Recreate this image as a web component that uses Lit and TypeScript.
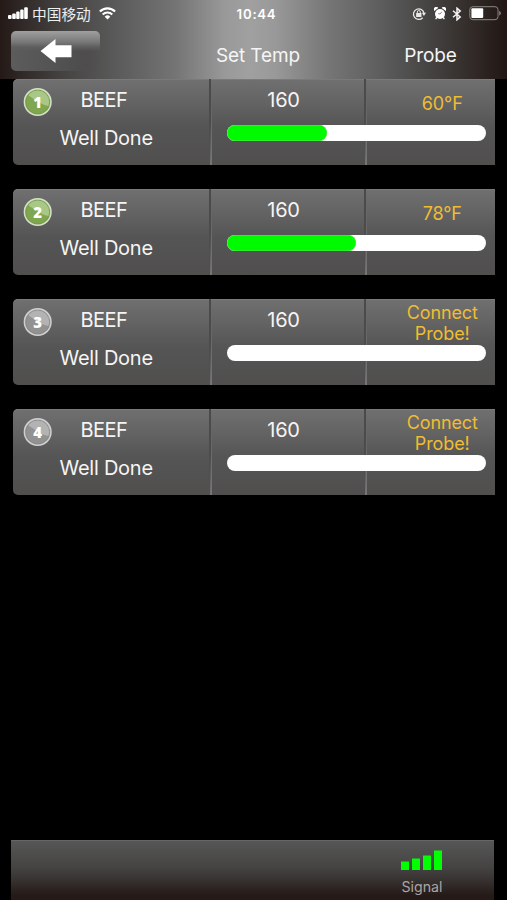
import { LitElement, html, css, svg } from "lit";
import { customElement, property } from "lit/decorators.js";
import { styleMap } from "lit/directives/style-map.js";

interface Probe {
  id: number;
  active: boolean;
  reading: string[];
  fill: number;
}

const PROBES: Probe[] = [
  { id: 1, active: true, reading: ["60°F"], fill: 100 },
  { id: 2, active: true, reading: ["78°F"], fill: 128.5 },
  { id: 3, active: false, reading: ["Connect", "Probe!"], fill: 0 },
  { id: 4, active: false, reading: ["Connect", "Probe!"], fill: 0 },
];

@customElement("status-bar")
export class StatusBar extends LitElement {
  static styles = css`
    :host {
      display: flex;
      height: 27px;
      align-items: center;
      color: #fff;
    }
    .left, .right {
      display: flex;
      align-items: center;
      flex: 1;
    }
    .left { padding-left: 8px; }
    .carrier {
      font: 14.7px/20px "Noto Sans CJK SC", sans-serif;
      margin: 0 8px 0 4px;
      color: #eee;
      transform: translateY(-0.5px);
    }
    .time {
      font: 600 13.2px/20px Inter, sans-serif;
      letter-spacing: 0.75px;
      margin-left: 4px;
    }
    .right { justify-content: flex-end; padding-right: 6px; }
    svg { display: block; flex: none; }
    .lock { margin-right: 8px; }
    .alarm { margin-right: 6px; }
    .bt { margin-right: 7px; }
  `;

  render() {
    return html`
      <div class="left">
        <svg width="20" height="13" viewBox="0 0 20 13" fill="#fff">
          <rect x="0" y="8" width="3.6" height="4" rx="1" />
          <rect x="4.2" y="6.4" width="3.6" height="5.6" rx="1" />
          <rect x="8.2" y="4.4" width="3.4" height="7.6" rx="1" />
          <rect x="12.2" y="2.4" width="3.4" height="9.6" rx="1" />
          <rect x="16.2" y="0.2" width="3.6" height="11.8" rx="1" />
        </svg>
        <span class="carrier">中国移动</span>
        <svg width="17" height="13" viewBox="0 0 17 13">
          <path d="M.9 4.5A10.6 10.6 0 0 1 16.1 4.5" fill="none" stroke="#fff" stroke-width="2.2" />
          <path d="M3.7 7.5A6.7 6.7 0 0 1 13.3 7.5" fill="none" stroke="#fff" stroke-width="2" />
          <path d="M5.7 9.7A4 4 0 0 1 11.3 9.7L8.5 12.6Z" fill="#fff" />
        </svg>
      </div>
      <span class="time">10:44</span>
      <div class="right">
        <svg class="lock" width="14" height="14" viewBox="0 0 14 14" fill="none" stroke="#e8e8e8">
          <path d="M10.7 10.7A5.3 5.3 0 1 1 12 6.3" stroke-width="1.3" />
          <path d="M9.8 5.8h4.2l-2.1 3.1Z" fill="#e8e8e8" stroke="none" />
          <path d="M5.3 6.5V5a1.5 1.5 0 0 1 3 0v1.5" stroke-width="1" />
          <rect x="4.1" y="6" width="5.4" height="4" rx=".5" fill="#e8e8e8" stroke="none" />
        </svg>
        <svg class="alarm" width="12" height="13" viewBox="0 0 12 13">
          <path d="M.2 4A2.2 2.2 0 0 1 4.2 .9ZM11.8 4A2.2 2.2 0 0 0 7.8 .9Z" fill="#fff" />
          <path d="M2.8 10.5l-1.2 1.6M9.2 10.5l1.2 1.6" stroke="#fff" stroke-width="1.3" />
          <circle cx="6" cy="7" r="5" fill="#fff" />
          <path d="M7.9 4.8L6 7L4.2 6.6" fill="none" stroke="#777" stroke-width=".9" />
        </svg>
        <svg class="bt" width="10" height="14" viewBox="0 0 10 14">
          <path d="M1 3.8L8.2 9.9L5 12.8V1.2L8.2 4.1L1 10.2" fill="none" stroke="#f4f4f4" stroke-width="1.5" />
        </svg>
        <svg width="32" height="15" viewBox="0 0 32 15">
          <rect x=".8" y=".7" width="28.2" height="13" rx="3" fill="none" stroke="#8b8583" stroke-width="1" />
          <rect x="2.4" y="2.3" width="11.8" height="9.8" rx="1" fill="#fff" />
          <path d="M30.2 4.8q1.6.7 1.6 2.4t-1.6 2.4Z" fill="#8b8583" />
        </svg>
      </div>
    `;
  }
}

@customElement("probe-badge")
export class ProbeBadge extends LitElement {
  @property({ type: Number }) number = 0;
  @property({ type: Boolean }) active = false;

  static styles = css`
    :host { display: block; width: 30px; height: 30px; }
    svg { display: block; }
    text { font: 800 15px "Open Sans", sans-serif; fill: #fff; text-anchor: middle; }
  `;

  render() {
    const c = this.active
      ? { base: "#80a650", gloss: "#a9c787", dark: "#6f9741", rim: "#d5dfc8" }
      : { base: "#929292", gloss: "#b3b3b3", dark: "#858585", rim: "#cfcfcf" };
    return html`
      <svg width="30" height="30" viewBox="0 0 30 30">
        <circle cx="14.7" cy="15" r="13.3" fill=${c.base} />
        <path d="M4.2 7.5A13 13 0 0 1 27.2 19Q21.7 19 14.7 14.5T4.2 7.5Z" fill=${c.gloss} />
        <circle cx="14.7" cy="15" r="12" fill="none" stroke=${c.dark} stroke-width=".8" />
        <circle cx="14.7" cy="15" r="13.3" fill="none" stroke=${c.rim} stroke-width="1.5" />
        ${svg`<text x="14.7" y="20.5">${this.number}</text>`}
      </svg>
    `;
  }
}

@customElement("probe-card")
export class ProbeCard extends LitElement {
  @property({ attribute: false }) probe!: Probe;

  static styles = css`
    :host {
      display: grid;
      grid-template-columns: 196px 155px 1fr;
      position: relative;
      height: 85.5px;
      box-sizing: border-box;
      border-radius: 5px 0 0 5px;
      background: linear-gradient(#707070, #626262 30%, #555 55%, #504f4e);
      box-shadow: inset 0 1px #7a7a7a;
      color: #f5f5f5;
      font: 20px/24px Inter, sans-serif;
      white-space: nowrap;
    }
    .food {
      display: grid;
      grid-template-columns: 40px 1fr;
      grid-template-rows: 38px 38px;
    }
    .badge { padding: 8px 0 0 10px; }
    .name {
      padding: 9px 0 0 27.5px;
      letter-spacing: -0.55px;
    }
    .done {
      grid-column: 1 / -1;
      padding: 9px 0 0 46.5px;
      letter-spacing: -0.25px;
    }
    .cell {
      background:
        linear-gradient(#4a4a4a, #4c4c4c 50%, #50505000) 0 0 / 2px 100% no-repeat,
        linear-gradient(#77777700, #6a6a6a 50%, #767676) 1px 0 / 2px 100% no-repeat;
    }
    .target { padding: 9px 6px 0 0; text-align: center; letter-spacing: -0.2px; }
    .probe {
      display: flex;
      flex-direction: column;
      justify-content: center;
      height: 48px;
      padding-left: 26px;
      text-align: center;
      color: #efbd32;
      font-size: 18px;
      line-height: 21px;
      letter-spacing: -0.1px;
    }
    .track {
      position: absolute;
      left: 214px;
      top: 46px;
      width: 258.5px;
      height: 16px;
      border-radius: 8px;
      background: #fff;
      box-sizing: border-box;
    }
    .fill {
      height: 16px;
      border-radius: 8px;
      background: #00fb00;
      box-shadow: inset 0 0 0 0.5px #62dd62;
    }
  `;

  render() {
    const p = this.probe;
    return html`
      <div class="food">
        <probe-badge class="badge" .number=${p.id} ?active=${p.active}></probe-badge>
        <span class="name">BEEF</span>
        <span class="done">Well Done</span>
      </div>
      <div class="cell"><div class="target">160</div></div>
      <div class="cell">
        <div class="probe">${p.reading.map((line) => html`<span>${line}</span>`)}</div>
      </div>
      <div class="track">
        ${p.fill ? html`<div class="fill" style=${styleMap({ width: `${p.fill}px` })}></div>` : null}
      </div>
    `;
  }
}

@customElement("app-root")
export class AppRoot extends LitElement {
  static styles = css`
    :host {
      display: flex;
      flex-direction: column;
      height: 900px;
      background: #000;
      overflow: hidden;
    }
    header {
      height: 79px;
      background: linear-gradient(90deg, #241917 0, #302927 22px, #464443 65px, #606060 130px, #747474 175px, #999 225px, #a0a0a0 250px, #999 275px, #757575 330px, #606060 375px, #454342 430px, #302926 475px, #211614 507px);
    }
    .nav {
      display: grid;
      grid-template-columns: 180px 156px 1fr;
      height: 52px;
      color: #f5f5f5;
      font: 19px/24px Inter, sans-serif;
      text-align: center;
    }
    .back {
      display: flex;
      align-items: center;
      justify-content: center;
      width: 89px;
      height: 40px;
      margin: 4px 0 0 11px;
      border-radius: 5px;
      background: linear-gradient(#a0a0a0, #777 28%, #5e5e5e 40%, #5e5e5e00 50%), linear-gradient(90deg, #5d5c5c, #4f4e4e 75%, #4b4a4a00);
    }
    .title { padding-top: 17px; letter-spacing: -0.1px; }
    .col { padding: 17px 0 0 18px; letter-spacing: -0.1px; }
    main {
      display: flex;
      flex-direction: column;
      gap: 24.5px;
      padding: 0 12.5px 0 13px;
    }
    footer {
      display: flex;
      justify-content: flex-end;
      height: 60px;
      margin: auto 13px 0 11px;
      background: linear-gradient(#575757, #454443 45%, #3a3635 62%, #251a17 92%);
      box-shadow: inset 0 1px #666;
    }
    .signal {
      display: flex;
      flex-direction: column;
      align-items: center;
      width: 60px;
      margin-right: 42px;
      padding-top: 10px;
      box-sizing: border-box;
      color: #aaa5a3;
      font: 14.2px/18px Inter, sans-serif;
    }
    .signal svg { display: block; margin-bottom: 7px; }
  `;

  render() {
    return html`
      <header>
        <status-bar></status-bar>
        <div class="nav">
          <div class="back">
            <svg width="32" height="26" viewBox="0 0 32 26">
              <path d="M.5 13L15.5 1V7.3H31.5V19.2H15.5V25Z" fill="#fff" />
            </svg>
          </div>
          <span class="title">Set Temp</span>
          <span class="col">Probe</span>
        </div>
      </header>
      <main>${PROBES.map((p) => html`<probe-card .probe=${p}></probe-card>`)}</main>
      <footer>
        <div class="signal">
          <svg width="42" height="21" viewBox="0 0 42 21" fill="#0f0">
            <rect x="0" y="11.5" width="8" height="8.5" />
            <rect x="11" y="8.5" width="8" height="11.5" />
            <rect x="22" y="5.5" width="8" height="14.5" />
            <rect x="33" y="0.5" width="8" height="19.5" />
          </svg>
          <span>Signal</span>
        </div>
      </footer>
    `;
  }
}
